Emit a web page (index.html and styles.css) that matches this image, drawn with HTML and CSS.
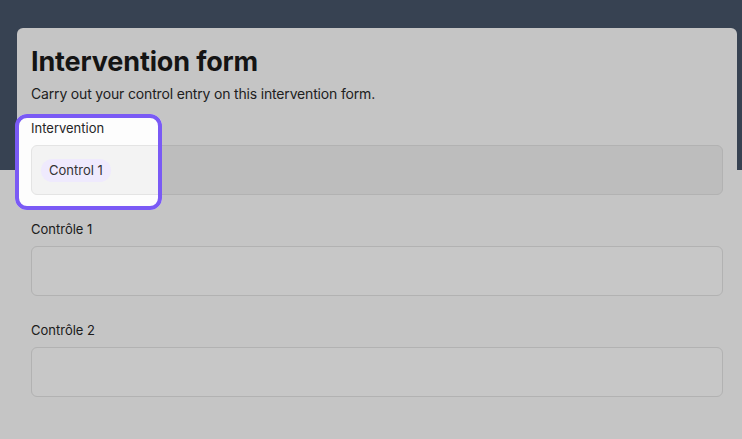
FILE: index.html
```html
<!DOCTYPE html>
<html lang="en">
<head>
<meta charset="utf-8">
<title>Intervention form</title>
<link rel="stylesheet" href="styles.css">
</head>
<body>
<div class="page">
  <header class="topbar"></header>
  <main class="card">
    <h1 class="title">Intervention form</h1>
    <p class="subtitle">Carry out your control entry on this intervention form.</p>
    <div class="field">
      <label class="label">Intervention</label>
      <div class="input input-filled">
        <span class="chip">Control 1</span>
      </div>
    </div>
    <div class="field">
      <label class="label">Contrôle 1</label>
      <div class="input"></div>
    </div>
    <div class="field">
      <label class="label">Contrôle 2</label>
      <div class="input"></div>
    </div>
  </main>
</div>
<div class="spotlight"></div>
</body>
</html>
```
FILE: styles.css
```css
* { box-sizing: border-box; }
html, body {
  margin: 0;
  padding: 0;
  height: 100%;
  overflow: hidden;
}
body {
  background: #fdfdfd;
  font-family: Inter, "Noto Sans", "Liberation Sans", sans-serif;
  color: #262626;
}
.page {
  position: relative;
  height: 100%;
}
.topbar {
  height: 170px;
  background: #475569;
}
.card {
  margin: -142px 5px 0 17px;
  background: #fdfdfd;
  border-radius: 6px 6px 0 0;
  padding: 17px 14px 0;
  height: 411px;
}
.title {
  margin: 0;
  font-size: 27px;
  line-height: 34px;
  font-weight: 700;
  color: #1a1a1a;
  letter-spacing: -0.15px;
}
.subtitle {
  margin: 5px 0 14px;
  font-size: 14px;
  line-height: 20px;
  color: #2a2a2a;
  letter-spacing: -0.17px;
}
.field {
  margin-bottom: 24px;
}
.label {
  display: block;
  font-size: 13px;
  line-height: 20px;
  font-weight: 400;
  color: #262626;
  margin-bottom: 7px;
}
.input {
  height: 50px;
  border: 1px solid #e4e4e4;
  border-radius: 6px;
  background: #ffffff;
  display: flex;
  align-items: center;
  padding: 0 9px;
}
.input-filled {
  background: #f3f3f3;
}
.chip {
  display: inline-flex;
  align-items: center;
  height: 23px;
  padding: 0 8px;
  border-radius: 12px;
  background: #efeafd;
  font-size: 13px;
  color: #333333;
}
.spotlight {
  position: absolute;
  left: 15px;
  top: 114px;
  width: 147px;
  height: 96px;
  border: 4px solid #7a5af5;
  border-radius: 12px;
  box-shadow: 0 0 0 2000px rgba(0, 0, 0, 0.22);
  pointer-events: none;
}
```
